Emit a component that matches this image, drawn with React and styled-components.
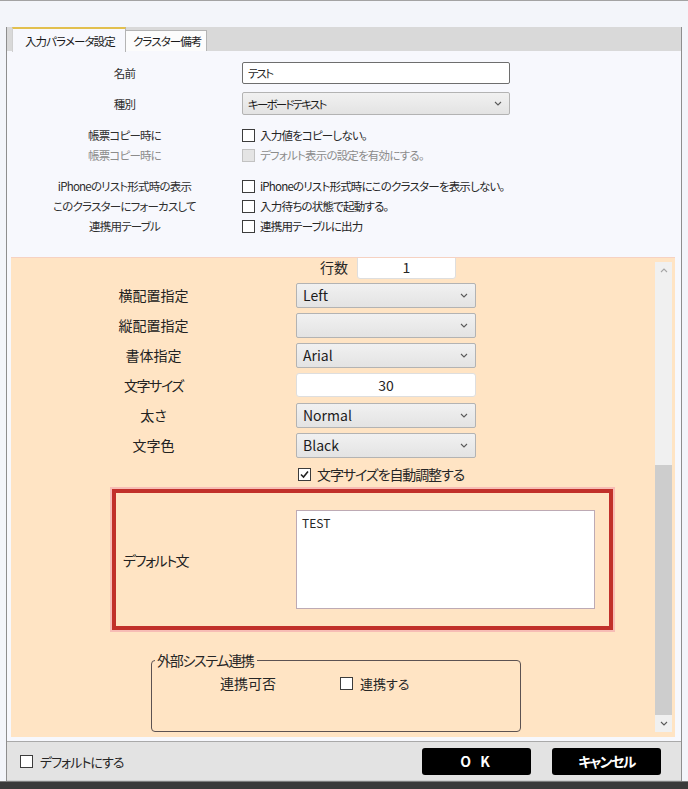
import styled, { createGlobalStyle } from "styled-components";

const GlobalStyle = createGlobalStyle`
  html, body {
    margin: 0;
    padding: 0;
    background: #f3f5fa;
  }
  body {
    font-family: "Noto Sans CJK JP", "Noto Sans", sans-serif;
    font-feature-settings: "palt" 1;
    color: #262626;
  }
  * {
    box-sizing: border-box;
  }
`;

const topChecks = [
  { label: "帳票コピー時に", text: "入力値をコピーしない。" },
  { label: "帳票コピー時に", text: "デフォルト表示の設定を有効にする。", disabled: true },
  { label: "iPhoneのリスト形式時の表示", text: "iPhoneのリスト形式時にこのクラスターを表示しない。", gap: 11 },
  { label: "このクラスターにフォーカスして", text: "入力待ちの状態で起動する。" },
  { label: "連携用テーブル", text: "連携用テーブルに出力" },
];

const styleFields = [
  { label: "横配置指定", value: "Left" },
  { label: "縦配置指定", value: "" },
  { label: "書体指定", value: "Arial" },
  { label: "文字サイズ", value: "30", input: true, kana: true },
  { label: "太さ", value: "Normal" },
  { label: "文字色", value: "Black" },
];

function Chevron({ up }) {
  return (
    <svg width="8" height="5" viewBox="0 0 8 5">
      <polyline
        points={up ? "1,4 4,1 7,4" : "1,1 4,4 7,1"}
        fill="none"
        stroke={up ? "#a6a6a6" : "#5a5a5a"}
        strokeWidth="1.1"
      />
    </svg>
  );
}

function CheckBox({ checked, disabled }) {
  return (
    <StyledBox $disabled={disabled}>
      {checked && (
        <svg width="11" height="11" viewBox="0 0 11 11">
          <polyline
            points="2,5.5 4.5,8 9,2.5"
            fill="none"
            stroke="#222"
            strokeWidth="1.6"
          />
        </svg>
      )}
    </StyledBox>
  );
}

function Select({ value, small }) {
  return (
    <StyledSelect $small={small}>
      <span>{value}</span>
      <Chevron />
    </StyledSelect>
  );
}

export default function App() {
  return (
    <>
      <GlobalStyle />
      <StyledWindow>
        <StyledTitleGap />
        <StyledFrame>
          <StyledTabStrip>
            <StyledTab $active>入力パラメータ設定</StyledTab>
            <StyledTab>クラスター備考</StyledTab>
          </StyledTabStrip>
          <StyledPanel>
            <StyledFormRow $height={22}>
              <StyledTopLabel>名前</StyledTopLabel>
              <StyledNameInput>テスト</StyledNameInput>
            </StyledFormRow>
            <StyledFormRow $height={23} $top={8}>
              <StyledTopLabel>種別</StyledTopLabel>
              <Select value="キーボードテキスト" small />
            </StyledFormRow>
            <StyledChecks>
              {topChecks.map((item, i) => (
                <StyledFormRow key={i} $height={20} $top={item.gap || 0}>
                  <StyledTopLabel $disabled={item.disabled}>
                    {item.label}
                  </StyledTopLabel>
                  <StyledCheckLine $disabled={item.disabled}>
                    <CheckBox disabled={item.disabled} />
                    {item.text}
                  </StyledCheckLine>
                </StyledFormRow>
              ))}
            </StyledChecks>

            <StyledScrollArea>
              <StyledScrollContent>
                <StyledCountRow>
                  <span>行数</span>
                  <StyledTextBox>1</StyledTextBox>
                </StyledCountRow>
                {styleFields.map((field) => (
                  <StyledFieldRow key={field.label}>
                    <StyledFieldLabel $kana={field.kana}>
                      {field.label}
                    </StyledFieldLabel>
                    {field.input ? (
                      <StyledTextBox $wide>{field.value}</StyledTextBox>
                    ) : (
                      <Select value={field.value} />
                    )}
                  </StyledFieldRow>
                ))}
                <StyledAutoSize>
                  <CheckBox checked />
                  文字サイズを自動調整する
                </StyledAutoSize>
                <StyledHighlight>
                  <StyledFieldLabel $left $kana>
                    デフォルト文
                  </StyledFieldLabel>
                  <StyledTextArea>TEST</StyledTextArea>
                </StyledHighlight>
                <StyledGroup>
                  <legend>外部システム連携</legend>
                  <StyledGroupRow>
                    <span>連携可否</span>
                    <StyledCheckLine $big>
                      <CheckBox />
                      連携する
                    </StyledCheckLine>
                  </StyledGroupRow>
                </StyledGroup>
              </StyledScrollContent>
              <StyledScrollBar>
                <StyledArrow>
                  <Chevron up />
                </StyledArrow>
                <StyledTrack>
                  <StyledThumb />
                </StyledTrack>
                <StyledArrow>
                  <Chevron up={false} />
                </StyledArrow>
              </StyledScrollBar>
            </StyledScrollArea>
          </StyledPanel>
          <StyledBottomBar>
            <StyledCheckLine $big $tight>
              <CheckBox />
              デフォルトにする
            </StyledCheckLine>
            <StyledButton $first>O K</StyledButton>
            <StyledButton>キャンセル</StyledButton>
          </StyledBottomBar>
        </StyledFrame>
        <StyledEdge />
      </StyledWindow>
    </>
  );
}

const StyledWindow = styled.div`
  width: 688px;
  height: 789px;
  display: flex;
  flex-direction: column;
  border-top: 1px solid #a3a3a3;
  background: #f3f5fa;
  overflow: hidden;
`;

const StyledTitleGap = styled.div`
  height: 26px;
  flex: none;
`;

const StyledFrame = styled.div`
  flex: 1;
  margin: 0 6px 0 6px;
  display: flex;
  flex-direction: column;
  border-left: 1px solid #8e8e8e;
  border-right: 1px solid #8e8e8e;
`;

const StyledTabStrip = styled.div`
  height: 24px;
  flex: none;
  display: flex;
  align-items: flex-end;
  padding-left: 5px;
  background: #d9d9d9;
`;

const StyledTab = styled.div`
  height: ${(p) => (p.$active ? "25px" : "21px")};
  margin-bottom: ${(p) => (p.$active ? "-1px" : "0")};
  padding: ${(p) => (p.$active ? "0 0 0 12px" : "0 0 0 7px")};
  width: ${(p) => (p.$active ? "114px" : "81px")};
  display: flex;
  align-items: center;
  white-space: nowrap;
  font-size: 11.5px;
  letter-spacing: -0.9px;
  color: #1a1a1a;
  background: ${(p) => (p.$active ? "#f7f8fd" : "#fcfcfc")};
  border: 1px solid #b4b4b4;
  border-top: ${(p) => (p.$active ? "2px solid #e2c04e" : "1px solid #b4b4b4")};
  border-bottom: none;
  border-left: ${(p) => (p.$active ? "1px solid #d0d0d0" : "none")};
  position: relative;
  z-index: ${(p) => (p.$active ? 1 : 0)};
`;

const StyledPanel = styled.div`
  flex: 1;
  display: flex;
  flex-direction: column;
  padding-top: 11px;
  background: #f7f8fd;
`;

const StyledFormRow = styled.div`
  display: grid;
  grid-template-columns: 235px 268px;
  align-items: center;
  height: ${(p) => p.$height}px;
  margin-top: ${(p) => p.$top || 0}px;
`;

const StyledChecks = styled.div`
  margin-top: 10px;
  display: flex;
  flex-direction: column;
`;

const StyledTopLabel = styled.div`
  text-align: center;
  font-size: 11.5px;
  letter-spacing: -0.8px;
  color: ${(p) => (p.$disabled ? "#8c8c8c" : "#2e2e2e")};
  white-space: nowrap;
`;

const StyledNameInput = styled.div`
  height: 22px;
  border: 1px solid #6e6e6e;
  border-radius: 2px;
  background: #fff;
  font-size: 11.5px;
  letter-spacing: -1.8px;
  padding-left: 5px;
  display: flex;
  align-items: center;
`;

const StyledSelect = styled.div`
  width: ${(p) => (p.$small ? "268px" : "180px")};
  height: ${(p) => (p.$small ? "23px" : "25px")};
  display: flex;
  align-items: center;
  justify-content: space-between;
  padding: 0 7px 0 ${(p) => (p.$small ? "5px" : "6px")};
  border: 1px solid #b3b3b3;
  border-radius: 2px;
  background: linear-gradient(#f1f1f1, #e3e3e3);
  font-size: ${(p) => (p.$small ? "11.5px" : "14px")};
  letter-spacing: ${(p) => (p.$small ? "-1.8px" : "0")};
  color: #1c1c1c;
`;

const StyledBox = styled.span`
  width: 13px;
  height: 13px;
  flex: none;
  display: inline-flex;
  align-items: center;
  justify-content: center;
  border: 1px solid ${(p) => (p.$disabled ? "#c2c2c2" : "#3c3c3c")};
  background: ${(p) => (p.$disabled ? "#e4e4e4" : "#fff")};
  margin-right: ${(p) => (p.$disabled ? "0" : "0")};
`;

const StyledCheckLine = styled.div`
  display: flex;
  align-items: center;
  gap: ${(p) => (p.$big ? "7px" : "5px")};
  font-size: ${(p) => (p.$big ? "13px" : "11.5px")};
  letter-spacing: ${(p) => (p.$tight ? "-1px" : p.$big ? "0" : "-0.8px")};
  color: ${(p) => (p.$disabled ? "#8c8c8c" : "#262626")};
  white-space: nowrap;
`;

const StyledScrollArea = styled.div`
  flex: 1;
  margin: 21px 6px 4px 4px;
  display: flex;
  overflow: hidden;
  background: #ffe4c4;
  border-top: 1px solid #f6d2c2;
`;

const StyledScrollContent = styled.div`
  flex: 1;
  display: flex;
  flex-direction: column;
  margin-top: -8px;
`;

const StyledCountRow = styled.div`
  height: 30px;
  flex: none;
  display: flex;
  align-items: center;
  gap: 9px;
  padding: 3px 0 0 309px;
  font-size: 14px;
  line-height: 14px;
`;

const StyledTextBox = styled.div`
  width: ${(p) => (p.$wide ? "180px" : "99px")};
  height: 24px;
  display: flex;
  align-items: center;
  justify-content: center;
  background: #fff;
  border: 1px solid #dedede;
  border-radius: 3px;
  font-size: 14px;
  line-height: 14px;
`;

const StyledFieldRow = styled.div`
  height: 30px;
  flex: none;
  display: grid;
  grid-template-columns: 285px 180px;
  align-items: center;
`;

const StyledFieldLabel = styled.div`
  text-align: ${(p) => (p.$left ? "left" : "center")};
  font-size: 14px;
  letter-spacing: ${(p) => (p.$kana ? "-1.4px" : "0")};
  color: #222;
`;

const StyledAutoSize = styled.div`
  height: 28px;
  flex: none;
  display: flex;
  align-items: center;
  gap: 6px;
  padding-left: 287px;
  font-size: 14px;
  letter-spacing: -1.1px;
`;

const StyledHighlight = styled.div`
  margin: 1px 0 0 101px;
  width: 501px;
  height: 141px;
  flex: none;
  display: grid;
  grid-template-columns: 173px 299px;
  align-items: center;
  padding-left: 7px;
  border: 4px solid #c1302a;
  box-shadow: 0 0 0 2px #f7bcb5;
`;

const StyledTextArea = styled.div`
  height: 99px;
  background: #fff;
  border: 1px solid #bdaab4;
  padding: 3px 5px;
  font-size: 12px;
`;

const StyledGroup = styled.fieldset`
  margin: 20px 0 0 140px;
  width: 370px;
  height: 82px;
  flex: none;
  padding: 0;
  border: 1.5px solid #5c5252;
  border-radius: 4px;
  font-size: 14px;

  legend {
    margin-left: 3px;
    padding: 0 3px 0 2px;
    line-height: 20px;
    letter-spacing: -1.3px;
  }
`;

const StyledGroupRow = styled.div`
  height: 20px;
  margin-top: 3px;
  display: flex;
  align-items: center;
  gap: 64px;
  padding-left: 68px;
  font-size: 14px;
`;

const StyledScrollBar = styled.div`
  width: 17px;
  flex: none;
  margin: 4px 3px 5px 0;
  display: flex;
  flex-direction: column;
  background: #f0f0f0;
`;

const StyledArrow = styled.div`
  height: 17px;
  flex: none;
  display: flex;
  align-items: center;
  justify-content: center;
`;

const StyledTrack = styled.div`
  flex: 1;
  display: flex;
  flex-direction: column;
  justify-content: flex-end;
`;

const StyledThumb = styled.div`
  height: 250px;
  background: #cdcdcd;
`;

const StyledBottomBar = styled.div`
  height: 40px;
  flex: none;
  display: flex;
  align-items: center;
  padding: 0 20px 0 13px;
  background: #e3e3e3;
  border-top: 1px solid #a9a9a9;
  border-bottom: 1px solid #cfcfcf;
`;

const StyledButton = styled.div`
  width: 109px;
  height: 27px;
  margin-left: ${(p) => (p.$first ? "auto" : "21px")};
  display: flex;
  align-items: center;
  justify-content: center;
  background: #000;
  border-radius: 3px;
  color: #fff;
  font-size: 14px;
  font-weight: bold;
  letter-spacing: ${(p) => (p.$first ? "3px" : "-1.6px")};
`;

const StyledEdge = styled.div`
  height: 8px;
  flex: none;
  background: #3a3a3a;
  border-top: 1px solid #7c7c7c;
`;
